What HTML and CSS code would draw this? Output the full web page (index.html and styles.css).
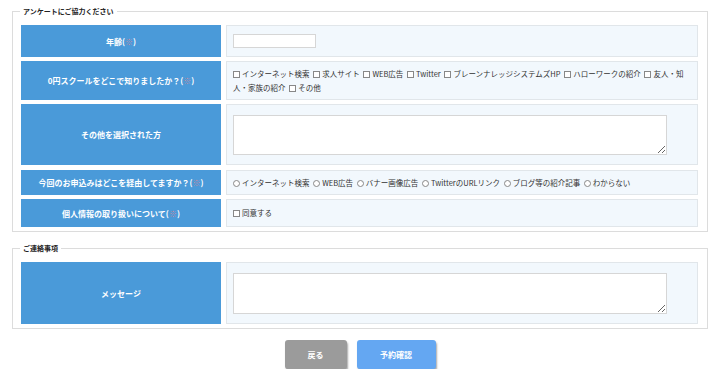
FILE: index.html
```html
<!DOCTYPE html>
<html lang="ja">
<head>
  <meta charset="UTF-8">
  <meta name="viewport" content="width=device-width, initial-scale=1.0">
  <title>アンケート</title>
  <link rel="stylesheet" href="styles.css">
</head>
<body>
  <form class="page">
    <!-- アンケート -->
    <fieldset class="box">
      <legend>アンケートにご協力ください</legend>
      <div class="rows">
        <div class="row row-age">
          <div class="label">年齢(<span class="req">※</span>)</div>
          <div class="value"><input type="text" class="age"></div>
        </div>
        <div class="row row-know">
          <div class="label">0円スクールをどこで知りましたか？(<span class="req">※</span>)</div>
          <div class="value">
            <div class="opts">
              <label><input type="checkbox">インターネット検索</label>
              <label><input type="checkbox">求人サイト</label>
              <label><input type="checkbox">WEB広告</label>
              <label><input type="checkbox">Twitter</label>
              <label><input type="checkbox">ブレーンナレッジシステムズHP</label>
              <label><input type="checkbox">ハローワークの紹介</label>
              <label><input type="checkbox">友人・知人・家族の紹介</label>
              <label><input type="checkbox">その他</label>
            </div>
          </div>
        </div>
        <div class="row row-other">
          <div class="label">その他を選択された方</div>
          <div class="value"><textarea></textarea></div>
        </div>
        <div class="row row-via">
          <div class="label">今回のお申込みはどこを経由してますか？(<span class="req">※</span>)</div>
          <div class="value">
            <div class="opts">
              <label><input type="radio" name="via">インターネット検索</label>
              <label><input type="radio" name="via">WEB広告</label>
              <label><input type="radio" name="via">バナー画像広告</label>
              <label><input type="radio" name="via">TwitterのURLリンク</label>
              <label><input type="radio" name="via">ブログ等の紹介記事</label>
              <label><input type="radio" name="via">わからない</label>
            </div>
          </div>
        </div>
        <div class="row row-agree">
          <div class="label">個人情報の取り扱いについて(<span class="req">※</span>)</div>
          <div class="value">
            <div class="opts">
              <label><input type="checkbox">同意する</label>
            </div>
          </div>
        </div>
      </div>
    </fieldset>

    <!-- ご連絡事項 -->
    <fieldset class="box">
      <legend>ご連絡事項</legend>
      <div class="rows">
        <div class="row row-msg">
          <div class="label">メッセージ</div>
          <div class="value"><textarea></textarea></div>
        </div>
      </div>
    </fieldset>

    <div class="buttons">
      <button type="button" class="btn btn-back">戻る</button>
      <button type="button" class="btn btn-confirm">予約確認</button>
    </div>
  </form>
</body>
</html>
```

FILE: styles.css
```css
/* 基本 */
body {
  margin: 0;
  font-family: "Noto Sans CJK JP", "Noto Sans", sans-serif;
  color: #333;
  background: #fff;
}

.page {
  padding: 6px 12px 0 12px;
}

/* 枠 */
.box {
  margin: 0 0 11px;
  padding: 9px 9px 4px 8px;
  border: 1px solid #dcdcdc;
  min-width: 0;
}

.box legend {
  font-size: 7px;
  font-weight: bold;
  line-height: 10px;
  padding: 0 3px;
  margin-left: -1px;
  color: #222;
}

.rows {
  display: flex;
  flex-direction: column;
  gap: 4px;
}

.row {
  display: flex;
  gap: 5px;
}

.row-age { height: 32px; }
.row-know { height: 39px; }
.row-other { height: 61px; margin-bottom: 1px; }
.row-via { height: 25px; }
.row-agree { height: 28px; }
.row-msg { height: 62px; }

.label {
  width: 200px;
  flex-shrink: 0;
  background-color: #4a9ad9;
  color: #fff;
  font-size: 8px;
  font-weight: bold;
  display: flex;
  align-items: center;
  justify-content: center;
  text-align: center;
}

.req {
  color: #c98aa0;
}

.value {
  flex: 1;
  min-width: 0;
  display: flex;
  align-items: center;
  background-color: #f2f8fd;
  border: 1px solid #e1e6ea;
  padding: 0 6px;
  font-size: 7.5px;
  line-height: 14px;
}

.opts {
  flex: 1;
}

.opts label {
  margin-right: 2px;
}

.opts input[type="checkbox"],
.opts input[type="radio"] {
  appearance: none;
  width: 7px;
  height: 7px;
  margin: 0 2px 0 0;
  border: 1px solid #888;
  background: #fff;
  vertical-align: -1px;
}

.opts input[type="radio"] {
  border-radius: 50%;
}

.age {
  display: block;
  width: 83px;
  height: 14px;
  box-sizing: border-box;
  border: 1px solid #d6d6d6;
  background: #fff;
  padding: 0 3px;
  margin: 0;
}

textarea {
  display: block;
  width: 434px;
  height: 40px;
  box-sizing: border-box;
  border: 1px solid #d6d6d6;
  background: #fff;
  margin: 0;
  padding: 2px;
}

.row-msg textarea {
  height: 41px;
}

/* ボタン */
.buttons {
  display: flex;
  justify-content: center;
  gap: 10px;
}

.btn {
  height: 29px;
  border: none;
  border-radius: 3px;
  color: #fff;
  font-family: inherit;
  font-size: 8px;
  font-weight: bold;
  box-shadow: 1px 2px 2px rgba(0, 0, 0, 0.35);
  cursor: pointer;
}

.btn-back {
  width: 62px;
  background-color: #9b9b9b;
}

.btn-confirm {
  width: 79px;
  background-color: #64a7f2;
}
```
